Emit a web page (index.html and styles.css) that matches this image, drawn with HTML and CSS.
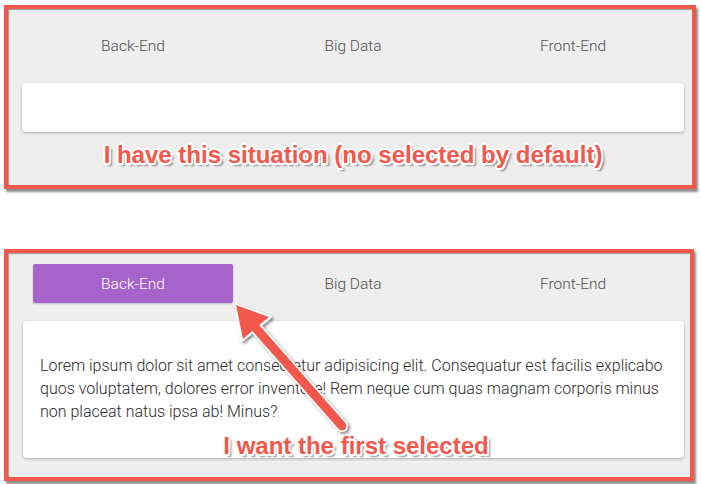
FILE: index.html
```html
<!DOCTYPE html>
<html>
<head>
<meta charset="utf-8">
<link rel="stylesheet" href="styles.css">
</head>
<body>
<div class="page">
  <section class="shot shot-top">
    <div class="tabs">
      <div class="tab">Back-End</div>
      <div class="tab">Big Data</div>
      <div class="tab">Front-End</div>
    </div>
    <div class="card card-empty"></div>
    <div class="note note-top">I have this situation (no selected by default)</div>
  </section>

  <section class="shot shot-bottom">
    <div class="tabs">
      <div class="tab active">Back-End</div>
      <div class="tab">Big Data</div>
      <div class="tab">Front-End</div>
    </div>
    <div class="card card-text">
      <p>Lorem ipsum dolor sit amet consectetur adipisicing elit. Consequatur est facilis explicabo quos voluptatem, dolores error inventore! Rem neque cum quas magnam corporis minus non placeat natus ipsa ab! Minus?</p>
    </div>
    <div class="note note-bottom">I want the first selected</div>
  </section>

  <svg class="arrow" width="701" height="484" viewBox="0 0 701 484">
    <defs>
      <filter id="sh" x="-20%" y="-20%" width="140%" height="140%">
        <feDropShadow dx="2" dy="2" stdDeviation="1.5" flood-color="#000" flood-opacity="0.45"/>
      </filter>
    </defs>
    <g filter="url(#sh)">
      <line x1="254" y1="326" x2="342" y2="426" stroke="#fff" stroke-width="12" stroke-linecap="round"/>
      <polygon points="236,305 270,317 242,340" fill="#fff" stroke="#fff" stroke-width="3" stroke-linejoin="round"/>
      <line x1="254" y1="326" x2="342" y2="426" stroke="#f2584c" stroke-width="9" stroke-linecap="round"/>
      <polygon points="236,305 269,317 258,326 243,339" fill="#f2584c"/>
    </g>
  </svg>
</div>
</body>
</html>
```

FILE: styles.css
```css
html, body {
  margin: 0;
  padding: 0;
  background: #ffffff;
}

.page {
  position: relative;
  width: 701px;
  height: 484px;
  overflow: hidden;
  font-family: Roboto, "Liberation Sans", sans-serif;
}

.shot {
  position: relative;
  box-sizing: border-box;
  margin-left: 4px;
  border: 4px solid #f2584c;
  background: #eeeeee;
  box-shadow: 2px 3px 2px rgba(0, 0, 0, 0.45), inset 1px 1px 1px rgba(0, 0, 0, 0.35);
}

.shot-top {
  margin-top: 5px;
  width: 692px;
  height: 184px;
  padding: 17px 0 0 14px;
}

.shot-bottom {
  margin-top: 60px;
  width: 690px;
  height: 232px;
  padding: 11px 0 0 15px;
}

.tabs {
  display: grid;
  grid-template-columns: repeat(3, 220px);
}

.shot-top .tabs {
  margin-left: 1px;
}

.tab {
  height: 39px;
  margin: 0 10px;
  display: flex;
  align-items: center;
  justify-content: center;
  font-size: 15.5px;
  font-weight: 300;
  color: #505050;
  border-radius: 2px;
}

.tab.active {
  background: #a663cb;
  color: #ffffff;
  box-shadow: 0 1px 2px rgba(0, 0, 0, 0.2);
}

.card {
  margin-top: 18px;
  background: #ffffff;
  border-radius: 4px;
  box-shadow: 0 1px 3px rgba(0, 0, 0, 0.28);
}

.card-empty {
  width: 662px;
  height: 49px;
}

.card-text {
  box-sizing: border-box;
  width: 661px;
  height: 137px;
  padding: 33px 17px 0 17px;
}

.card-text p {
  margin: 0;
  font-size: 16px;
  line-height: 23px;
  font-weight: 300;
  color: #2b2b2b;
}

.note {
  position: absolute;
  left: 0;
  right: 0;
  text-align: center;
  font-family: "Liberation Sans", Arial, sans-serif;
  font-weight: 700;
  font-size: 24px;
  line-height: 28px;
  letter-spacing: 0;
  color: #f2584c;
  text-shadow:
    -1.5px -1.5px 0 #fff, 1.5px -1.5px 0 #fff, -1.5px 1.5px 0 #fff, 1.5px 1.5px 0 #fff,
    0 -2px 0 #fff, 0 2px 0 #fff, -2px 0 0 #fff, 2px 0 0 #fff,
    3px 3px 2px rgba(0, 0, 0, 0.45);
}

.note-top {
  top: 132px;
  padding-left: 6px;
}

.note-bottom {
  top: 179px;
  padding-left: 14px;
}

.arrow {
  position: absolute;
  left: 0;
  top: 0;
  pointer-events: none;
}
```
